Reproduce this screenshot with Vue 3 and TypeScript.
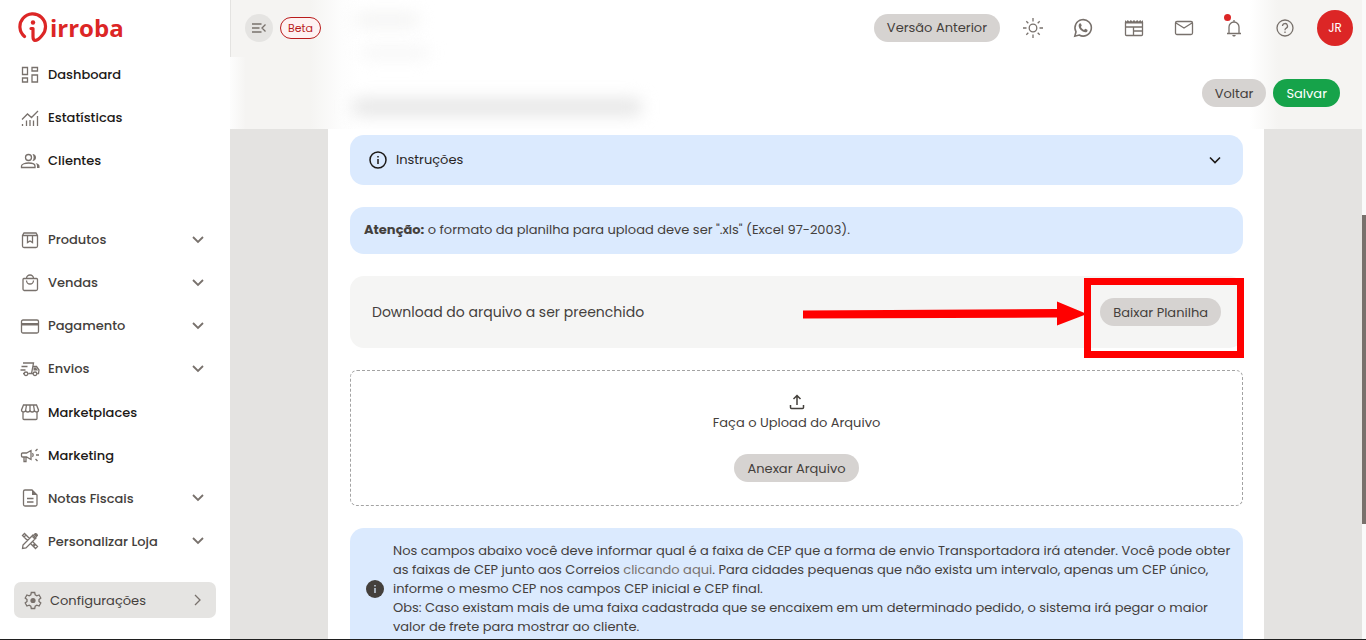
<script setup lang="ts">
interface NavEntry {
  label: string
  icon: string
  expandable: boolean
}

const mainNav: NavEntry[] = [
  { label: 'Dashboard', icon: 'dashboard', expandable: false },
  { label: 'Estatísticas', icon: 'stats', expandable: false },
  { label: 'Clientes', icon: 'people', expandable: false },
]

const storeNav: NavEntry[] = [
  { label: 'Produtos', icon: 'box', expandable: true },
  { label: 'Vendas', icon: 'bag', expandable: true },
  { label: 'Pagamento', icon: 'card', expandable: true },
  { label: 'Envios', icon: 'truck', expandable: true },
  { label: 'Marketplaces', icon: 'shop', expandable: false },
  { label: 'Marketing', icon: 'horn', expandable: false },
  { label: 'Notas Fiscais', icon: 'doc', expandable: true },
  { label: 'Personalizar Loja', icon: 'design', expandable: true },
]

const groups = [mainNav, storeNav]

const strokes: Record<string, string> = {
  dashboard: 'M2.5 2.500h5v7h-5z M12 2.500h5.500v3.500H12z M2.500 13h5v4h-5z M12 10h5.500v7H12z',
  stats:
    'M2 11.500L7.500 6l4 3.500L18 3 M2.500 16v2 M6.500 12.500V18 M10 12v6 M13.500 12.500V18 M17.500 8v10',
  people:
    'M8.500 3.500a3 3 0 1 0 0 6a3 3 0 1 0 0-6z M1.500 16.500v-1.500c0-2 4-3 7-3s6.500 1 6.500 3v1.500z',
  box: 'M2.500 5.500v10.500a1.500 1.500 0 0 0 1.500 1.500h12a1.500 1.500 0 0 0 1.500-1.500V5.500L16 3H4z M2.500 5.500h15 M7.500 6v6.500l2.500-1.500 2.500 1.500V6',
  bag: 'M3.500 5.500h13a1 1 0 0 1 1 1v9.500a1.500 1.500 0 0 1-1.500 1.500h-12a1.500 1.500 0 0 1-1-1.500V6.500a1 1 0 0 1 1-1z M6.500 5.500a3.500 3.500 0 0 1 7 0 M6.500 7.500a3.500 3.500 0 0 0 7 0',
  card: 'M3 4h14a1.500 1.500 0 0 1 1.500 1.500v10a1.500 1.500 0 0 1-1.500 1.500H3a1.500 1.500 0 0 1-1.500-1.500v-10A1.500 1.500 0 0 1 3 4z',
  truck:
    'M3 4h10.500l-2 10.500H8.500 M1.500 7.500h6 M.5 11h5 M13 7.500h3.500l2.500 3.500-.5 3.500h-1 M3 14.500h1 M12 14.500h1 M6 13a1.800 1.800 0 1 0 0 3.600a1.800 1.800 0 1 0 0-3.600z M15 13a1.800 1.800 0 1 0 0 3.600a1.800 1.800 0 1 0 0-3.600z',
  shop: 'M3.500 3h13l2 5c0 1.500-1 2-2 2s-2-.5-2.200-2c0 1.500-1 2-2.100 2s-2.200-.5-2.200-2c0 1.500-1.100 2-2.200 2s-2.100-.5-2.100-2c-.2 1.500-1.200 2-2.200 2s-2-.5-2-2z M6.500 3l-.8 5 M10 3v5 M13.500 3l.8 5 M3 10v6.500a1 1 0 0 0 1 1h12a1 1 0 0 0 1-1V10',
  horn: 'M2.500 8h4l4.500-2.500v9L6.500 12h-4a1 1 0 0 1-1-1V9a1 1 0 0 1 1-1z M4 12v4.500h2V12 M12.500 8.200c.8 1 .8 2.600 0 3.600 M15.500 6l2-2 M16 10h3 M15.500 14l2 2',
  doc: 'M5 2h7l5 5v9.500a1.500 1.500 0 0 1-1.500 1.500H5a1.500 1.500 0 0 1-1.500-1.500v-13A1.500 1.500 0 0 1 5 2z M7 10.500h6.500 M7 14h6.500',
  design:
    'M7.500 9.500L2.500 4.500l2-2 5 5 M12.500 10.500l5 5-2 2-5-5 M4 6l1.500-1.500 M13 14.500l1.500-1.500 M15.500 13.500L14 15 M2.500 17.500l.5-3.500L13 4l3 3L6 17z M12 5l3 3',
}

const solids: Record<string, string> = {
  people: 'M12.500 3c2 0 3.500 1.500 3.500 3.500S14.500 10 12.500 10c1.500-2 1.500-5 0-7z M15.500 12c2.500.7 4 1.600 4 3v2h-2.500v-2c0-1.300-.6-2.300-1.500-3z',
  card: 'M1.500 7h17v2.500h-17z',
  doc: 'M12 2l5 5h-5z',
  truck: 'M13.500 8.500h2.500l2 3h-4.500z',
  design: 'M13.500 3.500l1.500-1.500c1.500-.5 3 1 3 2.500L16.500 6.500z',
}
</script>

<template>
  <div class="app">
    <aside class="sidebar">
      <a class="brand" href="#" aria-label="irroba">
        <svg class="brand-mark" viewBox="0 0 31 31" aria-hidden="true">
          <path d="M7.500 24.500A12.800 12.800 0 1 1 25 23.500Q21 28.500 18 28.500Q16 28 16 24.500V16.500H14" />
          <circle cx="16" cy="10.500" r="2.200" />
        </svg>
        <span class="brand-name">irroba</span>
      </a>

      <nav class="nav">
        <ul v-for="(group, g) in groups" :key="g" class="nav-group">
          <li v-for="item in group" :key="item.label">
            <component
              :is="item.expandable ? 'button' : 'a'"
              class="nav-item"
              :class="{ expandable: item.expandable }"
              :href="item.expandable ? undefined : '#'"
              :type="item.expandable ? 'button' : undefined"
            >
              <svg class="icon" viewBox="0 0 20 20" aria-hidden="true">
                <path :d="strokes[item.icon]" />
                <path v-if="solids[item.icon]" class="solid" :d="solids[item.icon]" />
              </svg>
              <span class="nav-label">{{ item.label }}</span>
              <svg v-if="item.expandable" class="chevron" viewBox="0 0 12 12" aria-hidden="true">
                <path d="M1 3l5 5 5-5" />
              </svg>
            </component>
          </li>
        </ul>
      </nav>

      <button class="settings" type="button">
        <svg class="icon" viewBox="0 0 20 20" aria-hidden="true">
          <path
            d="M8.300 2.500h3.400l.5 2.400 1.600.9 2.300-.8 1.700 3-1.800 1.600v1.800l1.800 1.600-1.700 3-2.300-.8-1.600.9-.5 2.400H8.300l-.5-2.400-1.600-.9-2.300.8-1.700-3L4 11.400V9.600L2.200 8l1.700-3 2.300.8 1.600-.9z"
          />
          <circle class="solid" cx="10" cy="10.500" r="2.600" />
        </svg>
        <span class="nav-label">Configurações</span>
        <svg class="chevron thin" viewBox="0 0 12 12" aria-hidden="true"><path d="M3 1l5 5-5 5" /></svg>
      </button>
    </aside>

    <main class="main">
      <header class="header">
        <div class="ghosts" aria-hidden="true">
          <i class="ghost ghost-crumb"></i>
          <i class="ghost ghost-sub"></i>
          <i class="ghost ghost-title"></i>
        </div>
        <div class="topbar">
          <button class="collapse" type="button" aria-label="Recolher menu">
            <svg viewBox="0 0 16 12" aria-hidden="true">
              <path d="M1 2h9.500M1 6h7.500M1 10h9.500M14.500 2.500L11 6l3.500 3.500" />
            </svg>
          </button>
          <span class="beta">Beta</span>
          <button class="pill previous" type="button">Versão Anterior</button>
          <div class="tools">
            <button class="tool" type="button" aria-label="Tema">
              <svg viewBox="0 0 20 20" aria-hidden="true">
                <circle cx="10" cy="10" r="3.800" />
                <path d="M10 0v3.500M10 16.500V20M0 10h3.500M16.500 10H20M3.300 3.300l2 2M14.700 14.700l2 2M3.300 16.700l2-2M14.700 5.300l2-2" />
              </svg>
            </button>
            <button class="tool" type="button" aria-label="WhatsApp">
              <svg viewBox="0 0 20 20" aria-hidden="true">
                <path class="bold" d="M1.800 18.200l1.200-4.400a8.200 8.200 0 1 1 3.200 3.200z" />
                <path class="solid" d="M6.200 5.800c.6-.8 1.500-.8 1.800 0l.7 1.700c.1.500-.7 1-.8 1.400.7 1.400 1.800 2.300 3.200 3 .5-.2.900-1.200 1.400-1.100l1.800.9c.6.400.2 1.700-.5 2.200-1.500 1-3.600.2-5.400-1.300-1.800-1.500-3.700-4.300-2.200-6.800z" />
              </svg>
            </button>
            <button class="tool" type="button" aria-label="Painel">
              <svg viewBox="0 0 20 20" aria-hidden="true">
                <path d="M1.500 4v12.500a1 1 0 0 0 1 1h15a1 1 0 0 0 1-1V4M1.500 9h17M9.500 13h9M9.500 9v8.500" />
                <path class="solid" d="M1 5.500V2l1.400 1.500L3.800 2l1.500 1.500L6.900 2l1.500 1.500L10 2l1.600 1.500L13.100 2l1.600 1.500L16.200 2l1.400 1.500L19 2v3.500z" />
              </svg>
            </button>
            <button class="tool" type="button" aria-label="Mensagens">
              <svg viewBox="0 0 20 20" aria-hidden="true">
                <path d="M3 3.500h14a1.500 1.500 0 0 1 1.500 1.500v10a1.500 1.500 0 0 1-1.500 1.500H3A1.500 1.500 0 0 1 1.500 15V5A1.500 1.500 0 0 1 3 3.500zM2 5l8 5 8-5" />
              </svg>
            </button>
            <button class="tool" type="button" aria-label="Notificações">
              <svg viewBox="0 0 20 20" aria-hidden="true">
                <path d="M3 15.500h14M5 15.500V9a5 5 0 0 1 10 0v6.500M10 4V2" />
                <path class="solid" d="M8.300 17h3.400c0 2-3.400 2-3.400 0z" />
              </svg>
              <i class="badge"></i>
            </button>
            <button class="tool" type="button" aria-label="Ajuda">
              <svg viewBox="0 0 20 20" aria-hidden="true">
                <circle cx="10" cy="10" r="8" />
                <path d="M7.500 8a2.500 2.500 0 1 1 3.500 2.300c-.8.500-1 1-1 2M10 13.600v1.500" />
              </svg>
            </button>
            <button class="avatar" type="button" aria-label="Conta">JR</button>
          </div>
        </div>
        <div class="actions">
          <button class="pill" type="button">Voltar</button>
          <button class="pill save" type="button">Salvar</button>
        </div>
      </header>

      <section class="panel">
        <button class="card instructions" type="button">
          <svg class="info" viewBox="0 0 20 20" aria-hidden="true">
            <circle cx="10" cy="10" r="8" />
            <path d="M10 9v5M10 6v1.500" />
          </svg>
          <span class="nav-label">Instruções</span>
          <svg class="chevron dark" viewBox="0 0 12 12" aria-hidden="true"><path d="M1 3.500l5 5 5-5" /></svg>
        </button>

        <p class="card warning"><strong>Atenção:</strong> o formato da planilha para upload deve ser ".xls" (Excel 97-2003).</p>

        <div class="card download">
          <span class="download-text">Download do arquivo a ser preenchido</span>
          <button class="pill" type="button">Baixar Planilha</button>
          <svg class="callout" viewBox="0 0 442 82" aria-hidden="true">
            <path d="M0 33.500L254 32V24.500L284 37 254 48.500V40.500L0 41.500z" />
            <rect x="284.500" y="4.500" width="153" height="73" />
          </svg>
        </div>

        <div class="upload">
          <svg class="upload-icon" viewBox="0 0 16 16" aria-hidden="true">
            <path d="M8 11V2M4.500 5L8 1.500 11.500 5M1.500 11v2.500a1 1 0 0 0 1 1h11a1 1 0 0 0 1-1V11" />
          </svg>
          <span>Faça o Upload do Arquivo</span>
          <button class="pill attach" type="button">Anexar Arquivo</button>
        </div>

        <div class="card notice">
          <svg class="notice-icon" viewBox="0 0 18 18" aria-hidden="true">
            <circle cx="9" cy="9" r="9" />
            <path d="M9 8v5M9 5v1.500" />
          </svg>
          <div>
            <p>
              Nos campos abaixo você deve informar qual é a faixa de CEP que a forma de envio Transportadora irá
              atender. Você pode obter as faixas de CEP junto aos Correios <a href="#">clicando aqui</a>. Para cidades
              pequenas que não exista um intervalo, apenas um CEP único, informe o mesmo CEP nos campos CEP inicial e
              CEP final.
            </p>
            <p>
              Obs: Caso existam mais de uma faixa cadastrada que se encaixem em um determinado pedido, o sistema irá
              pegar o maior valor de frete para mostrar ao cliente.
            </p>
          </div>
        </div>
      </section>
    </main>

    <div class="scroll-track" aria-hidden="true"><i></i></div>
  </div>
</template>

<style>
body {
  overflow: hidden;
}
</style>

<style scoped>
.app {
  display: grid;
  grid-template-columns: 230px minmax(0, 1fr) 4px;
  height: 100vh;
  box-sizing: border-box;
  overflow: hidden;
  border-bottom: 1px solid #1f1f1f;
  background: #fff;
  color: #44403c;
  font-family: Poppins, Inter, 'Noto Sans', sans-serif;
  font-size: 13px;
  line-height: 19px;
}
button {
  padding: 0;
  border: 0;
  background: none;
  color: inherit;
  font: inherit;
  cursor: pointer;
}
a {
  color: inherit;
  text-decoration: none;
}
p {
  margin: 0;
}
svg {
  flex: none;
  fill: none;
  stroke: #78716c;
  stroke-width: 1.3;
}
svg .solid {
  fill: #78716c;
  stroke: none;
}
svg .bold {
  stroke-width: 1.6;
}

.brand {
  display: flex;
  align-items: center;
  gap: 2px;
  height: 53px;
  box-sizing: border-box;
  padding: 2px 0 0 17px;
}
.brand-mark {
  width: 31px;
  height: 31px;
  stroke: #dc2626;
  stroke-width: 3.2;
  stroke-linecap: round;
  stroke-linejoin: round;
}
.brand-mark circle {
  fill: #dc2626;
  stroke: none;
}
.brand-name {
  color: #dc2626;
  font-family: 'Open Sans', sans-serif;
  font-size: 24px;
  font-weight: 700;
  line-height: 30px;
}
.nav {
  display: flex;
  flex-direction: column;
  gap: 36px;
}
.nav-group {
  margin: 0;
  padding: 0;
  list-style: none;
}
.nav-group + .nav-group {
  display: flex;
  flex-direction: column;
  justify-content: space-between;
  height: 345px;
}
.nav-item {
  display: flex;
  align-items: center;
  gap: 8px;
  width: 100%;
  height: 43px;
  box-sizing: border-box;
  padding: 0 26px 0 20px;
  color: #1c1917;
  font-weight: 500;
  text-align: left;
}
.nav-item.expandable {
  color: #44403c;
}
.nav-label {
  flex: 1;
  text-align: left;
}
.icon {
  width: 20px;
  height: 20px;
}
.chevron {
  width: 12px;
  height: 12px;
  stroke-width: 1.8;
}
.chevron.thin {
  stroke-width: 1.3;
}
.chevron.dark {
  stroke: #1c1917;
  stroke-width: 1.6;
}
.settings {
  display: flex;
  align-items: center;
  gap: 7px;
  width: 202px;
  height: 36px;
  margin: 19px 14px 0;
  padding: 0 12px 0 9px;
  border-radius: 7px;
  background: #e5e4e2;
}

.main {
  overflow: hidden;
  background: #e4e3e1;
}
.header {
  position: relative;
  background: linear-gradient(
    to right,
    #f5f4f2 80px,
    #fdfdfd 112px,
    #fff 130px,
    #fff calc(100% - 112px),
    #f5f4f2 calc(100% - 84px)
  );
}
.ghosts {
  position: absolute;
  inset: 0;
  overflow: hidden;
}
.ghost {
  position: absolute;
  border-radius: 8px;
  filter: blur(8px);
}
.ghost-crumb {
  left: 124px;
  top: 12px;
  width: 66px;
  height: 16px;
  background: #f5f5f4;
}
.ghost-sub {
  left: 130px;
  top: 46px;
  width: 70px;
  height: 14px;
  background: #f7f7f7;
}
.ghost-title {
  left: 122px;
  top: 98px;
  width: 290px;
  height: 18px;
  background: #e7e7e7;
}
.topbar {
  position: relative;
  display: flex;
  align-items: center;
  height: 57px;
  box-sizing: border-box;
  padding: 0 9px 2px 14px;
  border-left: 1px solid #e4e3e1;
}
.collapse {
  display: grid;
  place-items: center;
  width: 28px;
  height: 28px;
  border-radius: 50%;
  background: #e5e4e2;
}
.collapse svg {
  width: 16px;
  height: 12px;
}
.beta {
  margin-left: 7px;
  padding: 0 7px;
  border: 1px solid #b91c1c;
  border-radius: 11px;
  background: #fef2f2;
  color: #b91c1c;
  font-size: 11px;
  line-height: 20px;
}
.pill {
  height: 28px;
  padding: 0 13px;
  border-radius: 14px;
  background: #d6d3d1;
  color: #44403c;
  white-space: nowrap;
}
.previous {
  margin-left: auto;
}
.tools {
  display: flex;
  align-items: center;
  justify-content: space-between;
  width: 338px;
  margin-left: 15px;
}
.tool {
  position: relative;
  display: grid;
  place-items: center;
  width: 36px;
  height: 36px;
}
.tool svg {
  width: 20px;
  height: 20px;
}
.badge {
  position: absolute;
  left: 8px;
  top: 4px;
  width: 7px;
  height: 7px;
  border-radius: 50%;
  background: #dc2626;
}
.avatar {
  width: 36px;
  height: 36px;
  border-radius: 50%;
  background: #dc2626;
  color: #fff;
  font-size: 12px;
}
.actions {
  position: relative;
  display: flex;
  justify-content: flex-end;
  gap: 7px;
  height: 72px;
  box-sizing: border-box;
  padding: 22px 22px;
  background: linear-gradient(to right, #fdfdfd, transparent 16px);
}
.save {
  background: #16a34a;
  color: #fff;
}

.panel {
  display: flex;
  flex-direction: column;
  gap: 22px;
  margin: 0 98px;
  padding: 6px 21px 22px 22px;
  background: #fff;
}
.card {
  border-radius: 14px;
  background: #dbeafe;
}
.instructions {
  display: flex;
  align-items: center;
  gap: 8px;
  height: 50px;
  padding: 0 22px 1px 18px;
  color: #292524;
}
.info {
  width: 20px;
  height: 20px;
  stroke: #1c1917;
  stroke-width: 1.5;
}
.warning {
  height: 47px;
  box-sizing: border-box;
  padding: 13px 14px;
}
.download {
  position: relative;
  display: flex;
  align-items: center;
  justify-content: space-between;
  height: 72px;
  padding: 0 22px;
  background: #f5f5f4;
}
.download-text {
  font-size: 14px;
}
.callout {
  position: absolute;
  right: -2px;
  top: 1px;
  width: 442px;
  height: 82px;
  pointer-events: none;
}
.callout path {
  fill: #f00;
  stroke: none;
}
.callout rect {
  stroke: #f00;
  stroke-width: 7;
}
.upload {
  display: flex;
  flex-direction: column;
  align-items: center;
  height: 136px;
  box-sizing: border-box;
  padding-top: 23px;
  border: 1px dashed #a3a3a3;
  border-radius: 7px;
}
.upload-icon {
  width: 16px;
  height: 16px;
  margin-bottom: 3px;
  stroke: #44403c;
  stroke-width: 1.5;
}
.attach {
  margin-top: 22px;
}
.notice {
  display: flex;
  align-items: center;
  gap: 9px;
  padding: 13px 10px 20px 16px;
}
.notice a {
  color: #78716c;
}
.notice-icon {
  width: 18px;
  height: 18px;
}
.notice-icon circle {
  fill: #44403c;
  stroke: none;
}
.notice-icon path {
  stroke: #dbeafe;
}
.scroll-track {
  height: 100vh;
  background: #fafafa;
}
.scroll-track i {
  display: block;
  height: 309px;
  margin-top: 215px;
  background: #78716c;
}
</style>
